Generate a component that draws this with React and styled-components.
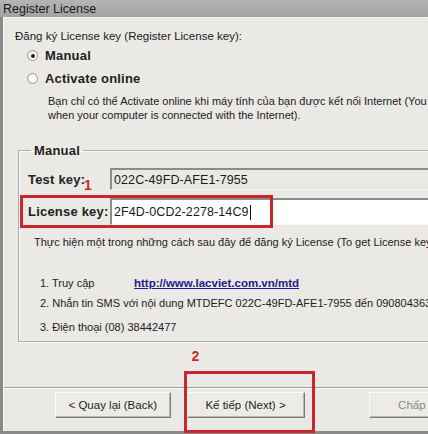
import React from 'react';
import styled, { createGlobalStyle } from 'styled-components';

const GlobalStyle = createGlobalStyle`
  html, body {
    margin: 0;
    padding: 0;
    overflow: hidden;
    background: #9a9a9a;
  }
  body {
    font-family: Tahoma, "DejaVu Sans", "Liberation Sans", sans-serif;
  }
`;

const Window = styled.div`
  width: 428px;
  height: 434px;
  overflow: hidden;
  display: flex;
  flex-direction: column;
  background: linear-gradient(90deg, #8f8f8f 0%, #b9b9b9 20%, #a3a3a3 45%, #bdbdbd 70%, #9c9c9c 100%);
`;

const TitleBar = styled.div`
  height: 17px;
  padding-left: 3px;
  display: flex;
  align-items: center;
  font-family: "Liberation Sans", Arial, sans-serif;
  font-size: 12.5px;
  color: #1a1a1a;
  background: linear-gradient(180deg, #b4b4b4, #a2a2a2);
`;

const Frame = styled.div`
  flex: 1;
  display: flex;
  padding: 0 0 3px 3px;
  background: #8a8a8a;
  min-height: 0;
`;

const Body = styled.div`
  flex: 1;
  width: 480px;
  min-width: 480px;
  background: #ebe9e6;
  border-top: 1px solid #f6f6f4;
  border-left: 1px solid #f6f6f4;
  font-family: "Liberation Sans", Arial, sans-serif;
  font-size: 11px;
  color: #222;
  display: flex;
  flex-direction: column;
`;

const Heading = styled.div`
  margin: 11px 0 0 11px;
  font-size: 11.5px;
  line-height: 14px;
`;

const RadioRow = styled.label`
  display: flex;
  align-items: center;
  gap: 7px;
  margin: ${p => p.$top}px 0 0 23px;
  font-weight: bold;
  font-size: 13px;
  line-height: 15px;
  letter-spacing: 0.2px;
`;

const RadioCircle = styled.span`
  width: 11px;
  height: 11px;
  border-radius: 50%;
  box-sizing: border-box;
  border: 1px solid #9a9a9a;
  background: radial-gradient(circle at 60% 60%, #ffffff 40%, #dcdcdc 100%);
  display: flex;
  align-items: center;
  justify-content: center;
  &::after {
    content: '';
    width: 4px;
    height: 4px;
    border-radius: 50%;
    background: ${p => (p.$checked ? '#1b1b1b' : 'transparent')};
  }
`;

const Desc = styled.div`
  margin: 8px 0 0 44px;
  line-height: 14px;
  font-size: 11px;
  white-space: nowrap;
`;

const Group = styled.fieldset`
  margin: 21px 0 0 14px;
  padding: 4px 0 7px 9px;
  border: 1px solid #a9a9a6;
  border-right: none;
  box-shadow: inset 1px 1px 0 #fbfbfb, 1px 1px 0 #fbfbfb;
  display: flex;
  flex-direction: column;
`;

const Legend = styled.legend`
  padding: 0 3px;
  margin-left: 3px;
  font-weight: bold;
  font-size: 13px;
  letter-spacing: 0.2px;
`;

const FieldRow = styled.div`
  position: relative;
  display: flex;
  align-items: center;
  height: ${p => p.$h}px;
  margin-top: ${p => p.$top}px;
`;

const FieldLabel = styled.span`
  width: 82px;
  font-weight: bold;
  font-size: 13px;
  letter-spacing: 0.2px;
`;

const Input = styled.div`
  flex: 1;
  align-self: stretch;
  box-sizing: border-box;
  border-top: 2px solid #8c8c8a;
  border-left: 2px solid #8c8c8a;
  border-bottom: 1px solid #f7f7f5;
  background: ${p => (p.$readonly ? '#e9e8e4' : '#ffffff')};
  padding-left: 2px;
  display: flex;
  align-items: center;
  font-family: "Liberation Sans", Arial, sans-serif;
  font-size: 12.5px;
  letter-spacing: 0.1px;
  color: #1b1b1b;
`;

const Caret = styled.span`
  display: inline-block;
  width: 1px;
  height: 15px;
  background: #111;
  margin-left: 1px;
`;

const Callout = styled.div`
  position: absolute;
  left: -8px;
  top: -3px;
  width: 247px;
  bottom: -3px;
  border: 3px solid #c9262c;
  pointer-events: none;
`;

const Marker = styled.span`
  position: absolute;
  left: ${p => p.$x}px;
  top: ${p => p.$y}px;
  color: #cf2a2a;
  font-weight: bold;
  font-size: 14px;
  font-family: "Liberation Sans", Arial, sans-serif;
`;

const Instruction = styled.div`
  margin: 10px 0 0 6px;
  line-height: 14px;
  white-space: nowrap;
`;

const Steps = styled.div`
  margin: 27px 0 0 12px;
  display: flex;
  flex-direction: column;
  gap: 6px;
`;

const Step = styled.div`
  display: flex;
  align-items: center;
  line-height: 14px;
  white-space: nowrap;
  margin-top: ${p => p.$top || 0}px;
`;

const StepLabel = styled.span`
  width: 94px;
`;

const Link = styled.span`
  color: #1c1c8c;
  font-weight: bold;
  text-decoration: underline;
  font-size: 11.5px;
`;

const Separator = styled.div`
  margin-top: ${p => p.$top}px;
  height: 0;
  border-top: 1px solid #9c9c98;
  border-bottom: 1px solid #fbfbfb;
`;

const ButtonBar = styled.div`
  position: relative;
  display: flex;
  align-items: center;
  margin: 3px 0 0 51px;
`;

const Button = styled.button`
  width: 118px;
  height: 26px;
  margin-right: ${p => p.$gap || 0}px;
  box-sizing: border-box;
  background: #ecebe7;
  border: 1px solid;
  border-color: #fbfbfb #7a7a78 #7a7a78 #fbfbfb;
  box-shadow: inset -1px -1px 0 #b8b8b4;
  font-family: "Liberation Sans", Arial, sans-serif;
  font-size: 11.5px;
  color: ${p => (p.$disabled ? '#8a8a88' : '#1e1e1e')};
  padding: 0;
`;

const NextWrap = styled.div`
  position: relative;
  margin-right: 64px;
`;

const NextCallout = styled.div`
  position: absolute;
  left: -3px;
  top: -21px;
  width: 131px;
  height: 62px;
  border: 3px solid #c9262c;
  box-sizing: border-box;
  pointer-events: none;
`;

export default function App() {
  return (
    <>
      <GlobalStyle />
      <Window>
        <TitleBar>Register License</TitleBar>
        <Frame>
          <Body>
            <Heading>Đăng ký License key (Register License key):</Heading>
            <RadioRow $top={5}>
              <RadioCircle $checked />
              Manual
            </RadioRow>
            <RadioRow $top={8}>
              <RadioCircle />
              Activate online
            </RadioRow>
            <Desc>
              Bạn chỉ có thể Activate online khi máy tính của bạn được kết nối Internet (You are only able to activate online
              <br />
              when your computer is connected with the Internet).
            </Desc>
            <Group>
              <Legend>Manual</Legend>
              <FieldRow $h={22} $top={6}>
                <FieldLabel>Test key:</FieldLabel>
                <Input $readonly>022C-49FD-AFE1-7955</Input>
                <Marker $x={56} $y={9}>1</Marker>
              </FieldRow>
              <FieldRow $h={27} $top={8}>
                <FieldLabel>License key:</FieldLabel>
                <Input>
                  2F4D-0CD2-2278-14C9
                  <Caret />
                </Input>
                <Callout />
              </FieldRow>
              <Instruction>
                Thực hiện một trong những cách sau đây để đăng ký License (To get License key, please do one of the following):
              </Instruction>
              <Steps>
                <Step>
                  <StepLabel>1. Truy cập</StepLabel>
                  <Link>http://www.lacviet.com.vn/mtd</Link>
                </Step>
                <Step>2. Nhắn tin SMS với nội dung MTDEFC 022C-49FD-AFE1-7955 đến 0908043636</Step>
                <Step $top={4}>3. Điện thoại (08) 38442477</Step>
              </Steps>
            </Group>
            <Separator $top={45} />
            <ButtonBar>
              <Button $gap={16}>&lt; Quay lại (Back)</Button>
              <NextWrap>
                <Button>Kế tiếp (Next) &gt;</Button>
                <NextCallout />
                <Marker $x={5} $y={-44}>2</Marker>
              </NextWrap>
              <Button $disabled>Chấp nhận</Button>
            </ButtonBar>
          </Body>
        </Frame>
      </Window>
    </>
  );
}
